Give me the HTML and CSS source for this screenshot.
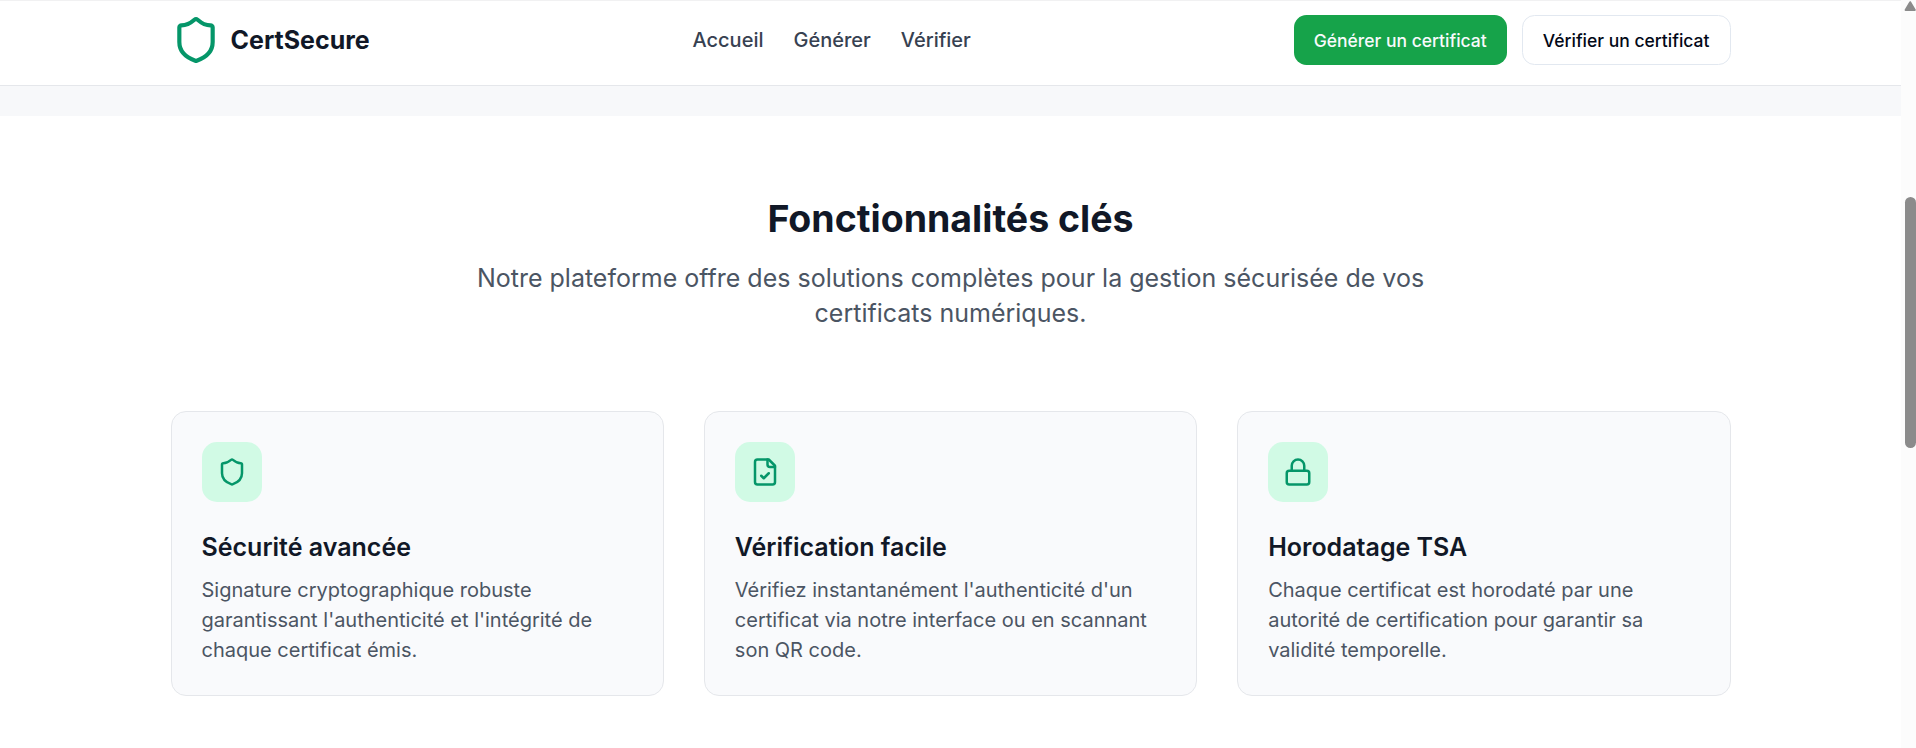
FILE: index.html
```html
<!DOCTYPE html>
<html lang="fr">
<head>
<meta charset="utf-8">
<title>CertSecure</title>
<link rel="stylesheet" href="styles.css">
</head>
<body>
<div class="page">
  <header class="header">
    <div class="container header-inner">
      <a class="brand">
        <svg class="icon logo" viewBox="0 0 24 24"><path d="M20 13c0 5-3.5 7.5-7.66 8.95a1 1 0 0 1-.67-.01C7.5 20.5 4 18 4 13V6a1 1 0 0 1 1-1c2 0 4.5-1.2 6.24-2.72a1.17 1.17 0 0 1 1.52 0C14.51 3.81 17 5 19 5a1 1 0 0 1 1 1z"/></svg>
        <span>CertSecure</span>
      </a>
      <nav class="nav"><a>Accueil</a><a>Générer</a><a>Vérifier</a></nav>
      <div class="actions">
        <button class="btn btn-primary">Générer un certificat</button>
        <button class="btn btn-outline">Vérifier un certificat</button>
      </div>
    </div>
  </header>
  <div class="hero-end"></div>
  <main class="features">
    <div class="container">
      <div class="intro">
        <h2>Fonctionnalités clés</h2>
        <p>Notre plateforme offre des solutions complètes pour la gestion sécurisée de vos certificats numériques.</p>
      </div>
      <div class="cards">
        <article class="card">
          <div class="tile"><svg class="icon" viewBox="0 0 24 24"><path d="M20 13c0 5-3.5 7.5-7.66 8.95a1 1 0 0 1-.67-.01C7.5 20.5 4 18 4 13V6a1 1 0 0 1 1-1c2 0 4.5-1.2 6.24-2.72a1.17 1.17 0 0 1 1.52 0C14.51 3.81 17 5 19 5a1 1 0 0 1 1 1z"/></svg></div>
          <h3>Sécurité avancée</h3>
          <p>Signature cryptographique robuste garantissant l'authenticité et l'intégrité de chaque certificat émis.</p>
        </article>
        <article class="card">
          <div class="tile"><svg class="icon" viewBox="0 0 24 24"><path d="M15 2H6a2 2 0 0 0-2 2v16a2 2 0 0 0 2 2h12a2 2 0 0 0 2-2V7Z"/><path d="M14 2v4a2 2 0 0 0 2 2h4"/><path d="m9 15 2 2 4-4"/></svg></div>
          <h3>Vérification facile</h3>
          <p>Vérifiez instantanément l'authenticité d'un certificat via notre interface ou en scannant son QR code.</p>
        </article>
        <article class="card">
          <div class="tile"><svg class="icon" viewBox="0 0 24 24"><rect width="18" height="11" x="3" y="11" rx="2"/><path d="M7 11V7a5 5 0 0 1 10 0v4"/></svg></div>
          <h3>Horodatage TSA</h3>
          <p>Chaque certificat est horodaté par une autorité de certification pour garantir sa validité temporelle.</p>
        </article>
      </div>
    </div>
  </main>
</div>
<div class="scrollbar">
  <svg class="arrow" viewBox="0 0 12 11"><path d="M1.6 10 6.2 2.2 10.8 10Z"/></svg>
  <div class="thumb"></div>
</div>
</body>
</html>
```
FILE: styles.css
```css
* { box-sizing: border-box; }
body {
  margin: 0;
  height: 748px;
  overflow: hidden;
  display: grid;
  grid-template-columns: 1fr 15px;
  background: #fff;
  font-family: Inter, "Liberation Sans", sans-serif;
  color: #111827;
}
h2, h3, p { margin: 0; }
.container { width: 1560px; margin: 0 auto; }
.icon {
  width: 30px;
  height: 30px;
  fill: none;
  stroke: #059669;
  stroke-width: 2;
  stroke-linecap: round;
  stroke-linejoin: round;
}
.header {
  height: 86px;
  border-top: 1px solid #f1f1f2;
  border-bottom: 1px solid #e5e7eb;
}
.header-inner {
  display: flex;
  justify-content: space-between;
  align-items: center;
  padding-top: 14px;
}
.brand {
  display: flex;
  align-items: center;
  gap: 10px;
  font-size: 25px;
  line-height: 35px;
  font-weight: 700;
}
.logo { width: 50px; height: 50px; }
.nav {
  display: flex;
  gap: 30px;
  font-size: 20px;
  font-weight: 500;
  line-height: 30px;
  color: #374151;
}
.actions { display: flex; gap: 15px; }
.btn {
  height: 50px;
  padding: 0 20px;
  border: 0;
  border-radius: 12.5px;
  font: 500 17.5px/25px Inter, "Liberation Sans", sans-serif;
}
.btn-primary { background: #16a34a; color: #f8fafc; }
.btn-outline { border: 1px solid #e2e8f0; background: #fff; color: #020817; }
.hero-end { height: 30px; background: #f7f8fa; }
.features { padding-top: 80px; }
.intro { width: 960px; margin: 0 auto 80px; text-align: center; }
.intro h2 { font-size: 37.5px; line-height: 45px; font-weight: 700; }
.intro p { margin-top: 20px; font-size: 25px; line-height: 35px; color: #4b5563; }
.cards { display: grid; grid-template-columns: repeat(3, 1fr); gap: 40px; }
.card {
  padding: 30px;
  border: 1px solid #e5e7eb;
  border-radius: 15px;
  background: #f9fafc;
}
.tile {
  width: 60px;
  height: 60px;
  display: grid;
  place-items: center;
  border-radius: 15px;
  background: #d1fae5;
}
.card h3 { margin-top: 27.5px; font-size: 25px; line-height: 35px; font-weight: 600; }
.card p { margin-top: 10.5px; font-size: 20px; line-height: 30px; color: #4b5563; }
.scrollbar { background: #fcfcfc; padding-left: 3px; }
.arrow {
  display: block;
  width: 12px;
  height: 11px;
  fill: #8b8b8b;
  stroke: #8b8b8b;
  stroke-width: 2;
  stroke-linejoin: round;
}
.thumb { width: 11px; height: 251px; margin: 186px 0 0 1px; border-radius: 5.5px; background: #8b8b8b; }
```
